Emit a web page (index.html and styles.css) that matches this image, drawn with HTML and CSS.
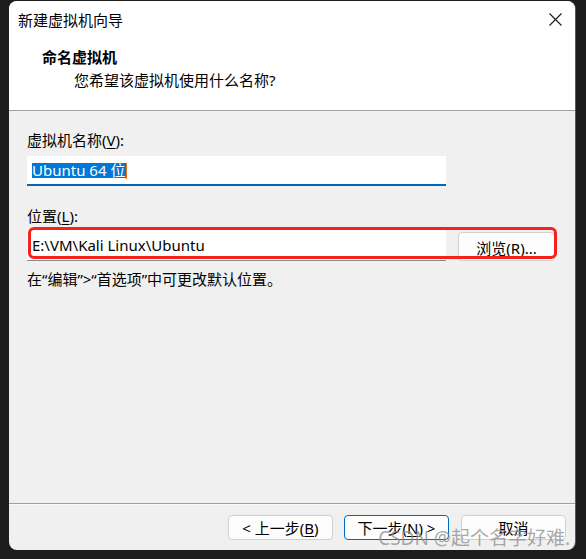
FILE: index.html
```html
<!DOCTYPE html>
<html lang="zh-CN">
<head>
<meta charset="utf-8">
<link rel="stylesheet" href="styles.css">
</head>
<body>
<div class="dialog">
  <div class="header">
    <div class="titlebar">
      <span class="title">新建虚拟机向导</span>
      <svg class="close" width="13" height="13" viewBox="0 0 13 13"><path d="M0.5 0.5L12.5 12.5M12.5 0.5L0.5 12.5" stroke="#1a1a1a" stroke-width="1.1" fill="none"/></svg>
    </div>
    <div class="heading">命名虚拟机</div>
    <div class="subheading">您希望该虚拟机使用什么名称?</div>
  </div>
  <div class="body">
    <div class="label">虚拟机名称(<u>V</u>):</div>
    <div class="input input-focus"><span class="selected">Ubuntu 64 位</span><span class="caret"></span></div>
    <div class="label label2">位置(<u>L</u>):</div>
    <div class="row">
      <div class="input input-plain">E:\VM\Kali Linux\Ubuntu</div>
      <div class="btn browse">浏览(<u>R</u>)...</div>
      <div class="annot"></div>
    </div>
    <div class="hint">在“编辑”&gt;“首选项”中可更改默认位置。</div>
  </div>
  <div class="footer">
    <div class="btn nav">&lt; 上一步(<u>B</u>)</div>
    <div class="btn nav primary">下一步(<u>N</u>) &gt;</div>
    <div class="btn nav">取消</div>
  </div>
  <div class="watermark">CSDN @起个名字好难.</div>
</div>
</body>
</html>
```

FILE: styles.css
```css
html, body {
  margin: 0;
  padding: 0;
}
body {
  background: #1d1d1d;
  width: 586px;
  height: 559px;
  overflow: hidden;
  font-family: "Noto Sans", "Noto Sans CJK SC", sans-serif;
  font-size: 15px;
  color: #000;
}
.dialog {
  position: relative;
  margin: 1px 0 0 9px;
  width: 566px;
  height: 549px;
  border-radius: 8px;
  overflow: hidden;
  background: #f0f0f0;
  display: flex;
  flex-direction: column;
  box-shadow: 1px 0 0 #5a5a5a;
}
.header {
  background: #fff;
  height: 109px;
  border-bottom: 1px solid #a0a0a0;
  box-sizing: content-box;
}
.titlebar {
  height: 36px;
  display: flex;
  align-items: center;
  justify-content: space-between;
  padding: 0 13px 0 9px;
}
.title {
  font-size: 15px;
  line-height: 20px;
  margin-top: 2px;
}
.close {
  margin-top: 1px;
}
.heading {
  font-weight: bold;
  line-height: 20px;
  padding-left: 33px;
  margin-top: 10px;
}
.subheading {
  line-height: 20px;
  padding-left: 65px;
  margin-top: 3px;
}
.body {
  flex: 1;
  padding-left: 18px;
}
.label {
  line-height: 20px;
  margin-top: 19px;
}
.label2 {
  margin-top: 20px;
}
.label u, .btn u {
  text-decoration: underline;
  text-underline-offset: 2px;
}
.input {
  width: 419px;
  background: #fff;
  box-sizing: border-box;
  display: flex;
  align-items: center;
  padding-left: 5px;
  white-space: nowrap;
}
.input-focus {
  margin-top: 6px;
  height: 30px;
  border-bottom: 2px solid #0067c0;
}
.selected {
  background: #0078d7;
  color: #fff;
  line-height: 15px;
  height: 15px;
  display: inline-block;
  padding-right: 1px;
  margin-top: 1px;
}
.caret {
  display: inline-block;
  width: 1px;
  height: 16px;
  background: #e8700a;
  margin-top: 1px;
}
.row {
  position: relative;
  margin-top: 4px;
  display: flex;
  align-items: flex-start;
  height: 31px;
}
.input-plain {
  height: 31px;
  border-bottom: 1px solid #8a8a8a;
  padding-top: 0;
}
.btn {
  box-sizing: border-box;
  background: #fdfdfd;
  border: 1px solid #d0d0d0;
  border-radius: 4px;
  display: flex;
  align-items: center;
  justify-content: center;
  line-height: 20px;
  white-space: nowrap;
}
.browse {
  margin-left: 12px;
  margin-top: 2px;
  width: 97px;
  height: 29px;
  padding-top: 3px;
}
.annot {
  position: absolute;
  left: 1px;
  top: -3px;
  width: 529px;
  height: 32px;
  border: 3px solid #f5221b;
  border-radius: 6px;
  box-sizing: border-box;
  pointer-events: none;
}
.hint {
  line-height: 20px;
  margin-top: 8px;
}
.footer {
  height: 47px;
  border-top: 1px solid #a0a0a0;
  box-shadow: inset 0 1px 0 #fafafa;
  display: flex;
  justify-content: flex-end;
  align-items: flex-start;
  padding: 11px 9px 0 0;
  box-sizing: border-box;
  gap: 11px;
}
.nav {
  width: 105px;
  height: 25px;
}
.primary {
  border: 1px solid #0067c0;
}
.nav + .nav + .nav {
  margin-left: 1px;
}
.watermark {
  position: absolute;
  right: 5px;
  bottom: 0px;
  font-size: 19px;
  line-height: 24px;
  color: rgba(140, 140, 140, 0.75);
  white-space: nowrap;
  pointer-events: none;
}
```
